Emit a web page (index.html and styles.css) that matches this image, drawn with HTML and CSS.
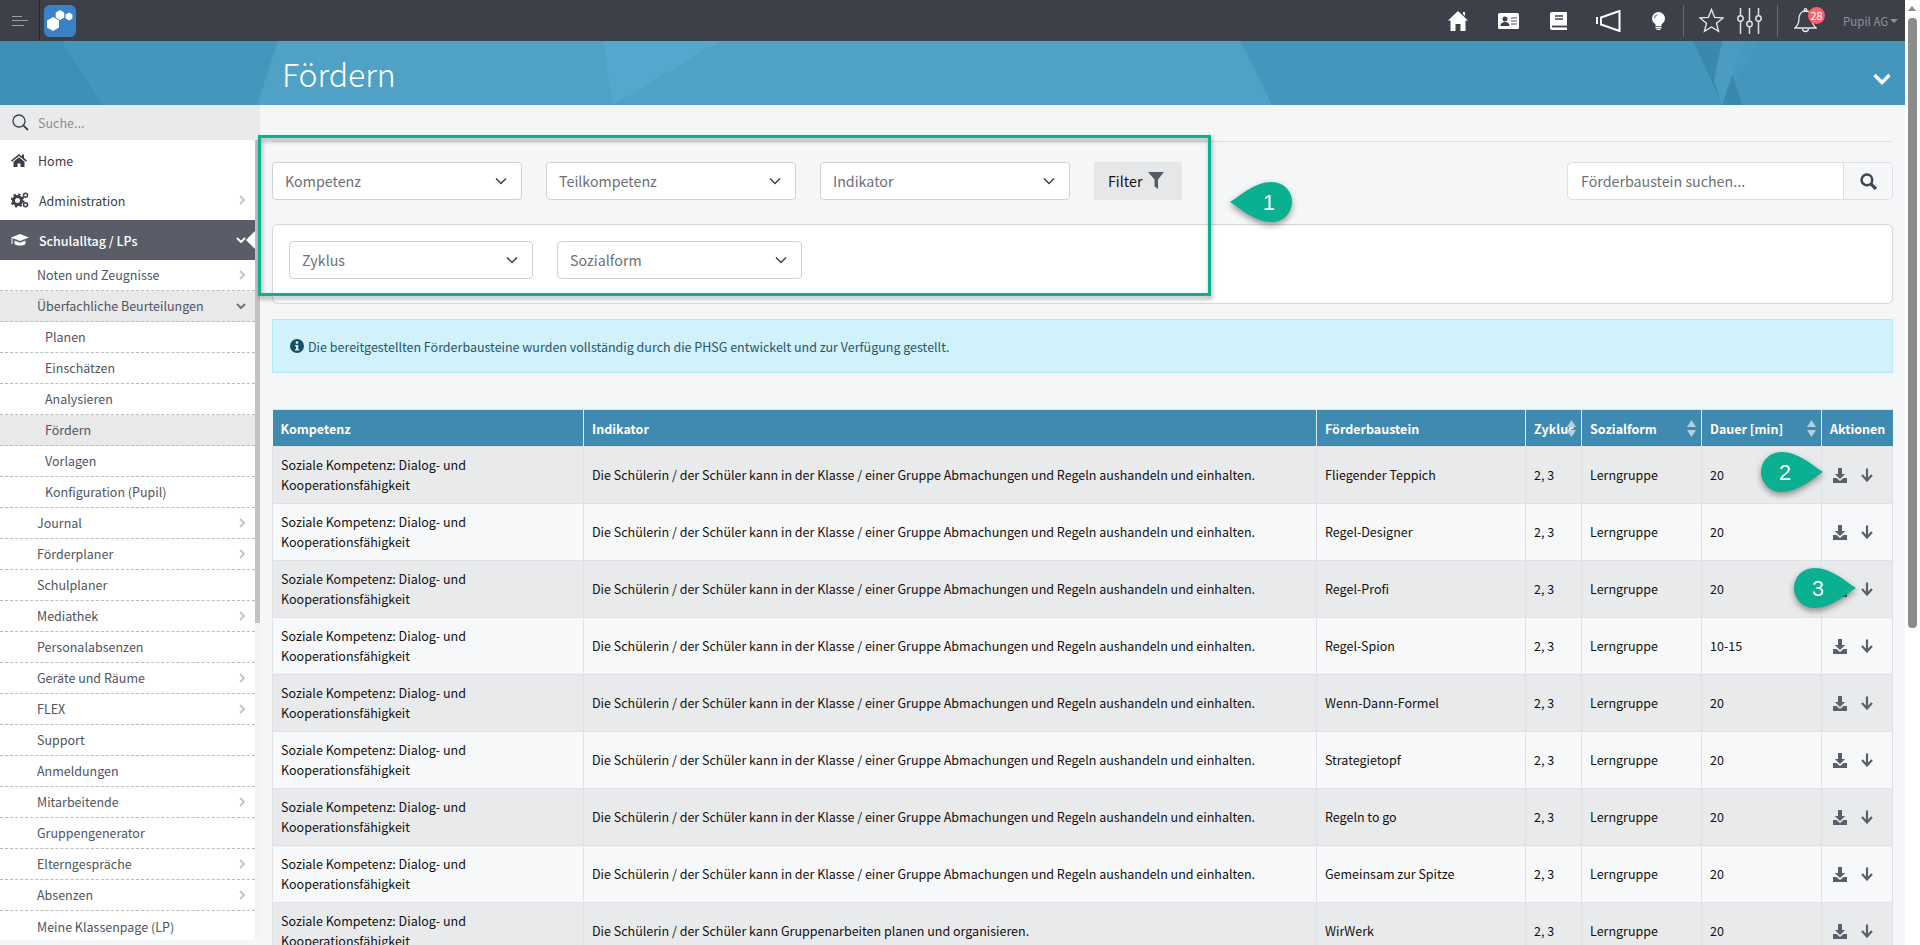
FILE: index.html
```html
<!DOCTYPE html>
<html>
<head>
  <meta name='viewport' content='width=device-width, initial-scale=1'>
  <meta charset='UTF-8'>
  <title>Fördern</title>
  <link rel="stylesheet" href="styles.css">
</head>
<body>
  <svg class='defs' width='0' height='0'>
    <symbol id='dl' viewBox='0 0 14 15'><path d='M5 0h4v6h3.200L7 11 1.800 6H5z'/><path d='M0 10h3.500L7 13l3.500-3H14v5H0z'/></symbol>
    <symbol id='arrow' viewBox='0 0 12 14'><path d='M6 .5v11.500M1 7l5 5.500L11 7' fill='none' stroke='currentColor' stroke-width='2.200'/></symbol>
    <symbol id='right' viewBox='0 0 6 10'><path d='M1 1l4 4-4 4' fill='none' stroke='currentColor' stroke-width='2'/></symbol>
    <symbol id='down' viewBox='0 0 10 6'><path d='M1 1l4 4 4-4' fill='none' stroke='currentColor' stroke-width='2'/></symbol>
    <symbol id='sel' viewBox='0 0 12 8'><path d='M1 1.500l5 5 5-5' fill='none' stroke='currentColor' stroke-width='1.500'/></symbol>
    <symbol id='sort' viewBox='0 0 9 17'><path d='M4.500 0 9 7H0zM4.500 17 0 10h9z'/></symbol>
  </svg>

  <div class='app'>
    <header class='top'>
      <div class='burger'><i></i><i></i><i></i></div>
      <svg class='logo' viewBox='0 0 32 32'>
        <rect width='32' height='32' rx='6' fill='#3b82c4'/>
        <path d='M9 12l6 3.500v7L9 26l-6-3.500v-7z' fill='#fff'/>
        <path d='M16 5l4.300 2.500v5L16 15l-4.300-2.500v-5z' fill='#fff'/>
        <path d='M25 7.500l3.400 2v4L25 15.500l-3.400-2v-4z' fill='#fff'/>
      </svg>
      <div class='top-r'>
        <svg class='ti ti-home' viewBox='0 0 20 20'><path d='M10 0 20 9.500h-2.500V20h-5v-7h-5v7h-5V9.500H0z' fill='#fff'/><path d='M15 1h2v4l-2-2z' fill='#fff'/></svg>
        <svg class='ti ti-card' viewBox='0 0 21 16'><rect width='21' height='16' rx='1.500' fill='#fff'/><circle cx='7' cy='6' r='2.500' fill='#3d4049'/><path d='M2.500 13c0-3 2-4 4.500-4s4.500 1 4.500 4z' fill='#3d4049'/><path d='M13 5h6M13 8h6M13 11h6' stroke='#8a8d95' stroke-width='1.300'/></svg>
        <svg class='ti ti-book' viewBox='0 0 17 18'><path d='M2 0h15v18H2a2 2 0 0 1-2-2V2a2 2 0 0 1 2-2z' fill='#fff'/><path d='M5 4h8M5 7h8' stroke='#3d4049' stroke-width='1.300'/><path d='M2 14.500h15' stroke='#3d4049' stroke-width='1.800'/></svg>
        <svg class='ti ti-mega' viewBox='0 0 25 22'><path d='M0 7h2v7H0z' fill='#fff'/><path d='M5 7.500 23.500 1v20L5 14.500z' fill='none' stroke='#fff' stroke-width='2'/></svg>
        <svg class='ti ti-bulb' viewBox='0 0 15 18'><circle cx='7.500' cy='6.500' r='6.500' fill='#fff'/><path d='M4.500 10h6v4h-6z' fill='#fff'/><path d='M4.500 15.500h6M5.500 17.300h4' stroke='#fff' stroke-width='1.300'/><path d='M3.500 6.500c0-2 1.200-3.300 3-3.600' fill='none' stroke='#56a7d8' stroke-width='1.300'/></svg>
        <span class='sep sep-a'></span>
        <svg class='ti ti-star' viewBox='0 0 25 25'><path d='M12.500 1.500l3.100 7.800 8.400.6-6.500 5.300 2.100 8.200-7.100-4.500-7.100 4.500 2.100-8.200L1 9.900l8.400-.6z' fill='none' stroke='#e8e8e8' stroke-width='1.300'/></svg>
        <svg class='ti ti-sliders' viewBox='0 0 25 26' fill='none' stroke='#e0e0e0' stroke-width='1.500'><path d='M3.500 0v8M3.500 13v13M12.500 0v13M12.500 19v7M21.500 0v8M21.500 13v13'/><circle cx='3.500' cy='10.500' r='2.700'/><circle cx='12.500' cy='16' r='2.700'/><circle cx='21.500' cy='10.500' r='2.700'/></svg>
        <span class='sep sep-b'></span>
        <div class='bell'>
          <svg class='ti-bell' viewBox='0 0 23 26' fill='none' stroke='#e8e8e8' stroke-width='1.300'><path d='M11.500 3c-4.500 0-6.500 3.500-6.500 8 0 4-1 6-4 9h21c-3-3-4-5-4-9 0-4.500-2-8-6.500-8z'/><circle cx='11.500' cy='2' r='1.300'/><path d='M8.500 20.500a3 3 0 0 0 6 0'/></svg>
          <span class='badge'>28</span>
        </div>
        <span class='user'>Pupil AG<i class='caret'></i></span>
      </div>
    </header>

    <div class='banner'>
      <svg class='banner-bg' viewBox='0 0 1905 64' preserveAspectRatio='none'>
        <rect width='1905' height='64' fill='#4396bc'/>
        <path d='M0 0h62l40 64H0z' fill='#3f90b6'/>
        <path d='M278 0h963l31 64H257z' fill='#4fa1c6'/>
        <path d='M603 0h117l-107 64z' fill='#55a8cd'/>
        <path d='M1722 0h37l-37 64z' fill='#469abf'/>
        <path d='M1693 0h29l20 64h-19z' fill='#3b88af'/>
        <path d='M1722 0h22l-22 64-8-24z' fill='#4a9cc2'/>
      </svg>
      <h1>Fördern</h1>
      <svg class='banner-chev' viewBox='0 0 18 12'><path d='M1.500 2 9 9.500 16.500 2' fill='none' stroke='#fff' stroke-width='3.400'/></svg>
    </div>

    <div class='body'>
      <aside class='side'>
        <div class='side-search'>
          <svg class='side-mag' viewBox='0 0 17 17' fill='none' stroke='#3d4049' stroke-width='1.300'><circle cx='7' cy='7' r='6'/><path d='M11.300 11.300 16 16' stroke-width='1.800'/></svg>
          <span>Suche...</span>
        </div>
        <div class='side-wrap'>
          <nav class='nav'>
            <a class='top-item'>
              <svg class='ni ni-home' viewBox='0 0 16 14'><path d='M8 1 0 7.500l1 1.200L8 3l7 5.700 1-1.200-3-2.400V1.500h-2v2z'/><path d='M8 4.300 2.500 8.800V14H6.500v-3.500h3V14h4V8.800z'/></svg>Home
            </a>
            <a class='top-item'>
              <svg class='ni ni-cogs' viewBox='0 0 18 16'>
                <circle cx='6.500' cy='8.500' r='4' fill='none' stroke='#3d4049' stroke-width='3'/>
                <circle cx='6.500' cy='8.500' r='6' fill='none' stroke='#3d4049' stroke-width='2' stroke-dasharray='2.300 2.400'/>
                <circle cx='14.500' cy='3.200' r='2' fill='none' stroke='#3d4049' stroke-width='1.500'/>
                <circle cx='14.500' cy='12.800' r='2' fill='none' stroke='#3d4049' stroke-width='1.500'/>
              </svg><span class='ni-t'>Administration</span>
              <svg class='chev'><use href='#right'/></svg>
            </a>
            <a class='top-item on'>
              <svg class='ni ni-cap' viewBox='0 0 18 14'><path d='M9 1 18 4.500 9 8 0 4.500z' fill='#fff'/><path d='M3.500 7.500V11c3 2 8 2 11 0V7.500L9 9.700z' fill='#fff'/><path d='M1 5v6' stroke='#fff'/></svg><span class='ni-t'>Schulalltag / LPs</span>
              <svg class='chev-d chev-w'><use href='#down'/></svg>
              <i class='notch'></i>
            </a>
            <a class='sub'>Noten und Zeugnisse<svg class='chev'><use href='#right'/></svg></a>
            <a class='sub act'>Überfachliche Beurteilungen<svg class='chev-d'><use href='#down'/></svg></a>
            <a class='sub sub2'>Planen</a>
            <a class='sub sub2'>Einschätzen</a>
            <a class='sub sub2'>Analysieren</a>
            <a class='sub sub2 act'>Fördern</a>
            <a class='sub sub2'>Vorlagen</a>
            <a class='sub sub2'>Konfiguration (Pupil)</a>
            <a class='sub'>Journal<svg class='chev'><use href='#right'/></svg></a>
            <a class='sub'>Förderplaner<svg class='chev'><use href='#right'/></svg></a>
            <a class='sub'>Schulplaner</a>
            <a class='sub'>Mediathek<svg class='chev'><use href='#right'/></svg></a>
            <a class='sub'>Personalabsenzen</a>
            <a class='sub'>Geräte und Räume<svg class='chev'><use href='#right'/></svg></a>
            <a class='sub'>FLEX<svg class='chev'><use href='#right'/></svg></a>
            <a class='sub'>Support</a>
            <a class='sub'>Anmeldungen</a>
            <a class='sub'>Mitarbeitende<svg class='chev'><use href='#right'/></svg></a>
            <a class='sub'>Gruppengenerator</a>
            <a class='sub'>Elterngespräche<svg class='chev'><use href='#right'/></svg></a>
            <a class='sub'>Absenzen<svg class='chev'><use href='#right'/></svg></a>
            <a class='sub last'>Meine Klassenpage (LP)</a>
          </nav>
          <div class='side-track'><div class='side-thumb'></div></div>
        </div>
      </aside>

      <main class='main'>
        <hr class='rule'>
        <div class='filters'>
          <div class='sel'>Kompetenz<svg><use href='#sel'/></svg></div>
          <div class='sel'>Teilkompetenz<svg><use href='#sel'/></svg></div>
          <div class='sel'>Indikator<svg><use href='#sel'/></svg></div>
          <div class='btn-filter'>Filter
            <svg viewBox='0 0 16 17'><path d='M0 0h16L10 7.500V17L6.500 14.500V7.500z' fill='#565a66'/></svg>
          </div>
          <div class='find'>
            <span class='find-in'>Förderbaustein suchen...</span>
            <span class='find-btn'><svg viewBox='0 0 16 16' fill='none' stroke='#3f4654' stroke-width='2.400'><circle cx='6.500' cy='6.500' r='5'/><path d='M10.200 10.200 15 15' stroke-width='3'/></svg></span>
          </div>
        </div>
        <div class='card'>
          <div class='sel sel-z'>Zyklus<svg><use href='#sel'/></svg></div>
          <div class='sel sel-s'>Sozialform<svg><use href='#sel'/></svg></div>
        </div>
        <div class='alert'>
          <svg class='alert-i' viewBox='0 0 14 14'><circle cx='7' cy='7' r='7' fill='#174f66'/><rect x='5.800' y='2.300' width='2.400' height='2.400' fill='#d1f2fa'/><path d='M5 6h3.200v4.200h1v1.300H5v-1.300h1V7.300H5z' fill='#d1f2fa'/></svg>
          Die bereitgestellten Förderbausteine wurden vollständig durch die PHSG entwickelt und zur Verfügung gestellt.
        </div>
        <table class='tbl'>
          <colgroup>
            <col class='c1'><col class='c2'><col class='c3'><col class='c4'><col class='c5'><col class='c6'><col class='c7'>
          </colgroup>
          <thead>
            <tr>
              <th>Kompetenz</th><th>Indikator</th><th>Förderbaustein</th>
              <th class='srt'>Zyklus<svg><use href='#sort'/></svg></th>
              <th class='srt'>Sozialform<svg><use href='#sort'/></svg></th>
              <th class='srt'>Dauer [min]<svg><use href='#sort'/></svg></th>
              <th>Aktionen</th>
            </tr>
          </thead>
          <tbody>
            <tr><td>Soziale Kompetenz: Dialog- und Kooperationsfähigkeit</td><td>Die Schülerin / der Schüler kann in der Klasse / einer Gruppe Abmachungen und Regeln aushandeln und einhalten.</td><td>Fliegender Teppich</td><td>2, 3</td><td>Lerngruppe</td><td>20</td><td><div class='acts'><svg class='i-dl'><use href='#dl'/></svg><svg class='i-ar'><use href='#arrow'/></svg></div></td></tr>
            <tr><td>Soziale Kompetenz: Dialog- und Kooperationsfähigkeit</td><td>Die Schülerin / der Schüler kann in der Klasse / einer Gruppe Abmachungen und Regeln aushandeln und einhalten.</td><td>Regel-Designer</td><td>2, 3</td><td>Lerngruppe</td><td>20</td><td><div class='acts'><svg class='i-dl'><use href='#dl'/></svg><svg class='i-ar'><use href='#arrow'/></svg></div></td></tr>
            <tr><td>Soziale Kompetenz: Dialog- und Kooperationsfähigkeit</td><td>Die Schülerin / der Schüler kann in der Klasse / einer Gruppe Abmachungen und Regeln aushandeln und einhalten.</td><td>Regel-Profi</td><td>2, 3</td><td>Lerngruppe</td><td>20</td><td><div class='acts'><svg class='i-dl'><use href='#dl'/></svg><svg class='i-ar'><use href='#arrow'/></svg></div></td></tr>
            <tr><td>Soziale Kompetenz: Dialog- und Kooperationsfähigkeit</td><td>Die Schülerin / der Schüler kann in der Klasse / einer Gruppe Abmachungen und Regeln aushandeln und einhalten.</td><td>Regel-Spion</td><td>2, 3</td><td>Lerngruppe</td><td>10-15</td><td><div class='acts'><svg class='i-dl'><use href='#dl'/></svg><svg class='i-ar'><use href='#arrow'/></svg></div></td></tr>
            <tr><td>Soziale Kompetenz: Dialog- und Kooperationsfähigkeit</td><td>Die Schülerin / der Schüler kann in der Klasse / einer Gruppe Abmachungen und Regeln aushandeln und einhalten.</td><td>Wenn-Dann-Formel</td><td>2, 3</td><td>Lerngruppe</td><td>20</td><td><div class='acts'><svg class='i-dl'><use href='#dl'/></svg><svg class='i-ar'><use href='#arrow'/></svg></div></td></tr>
            <tr><td>Soziale Kompetenz: Dialog- und Kooperationsfähigkeit</td><td>Die Schülerin / der Schüler kann in der Klasse / einer Gruppe Abmachungen und Regeln aushandeln und einhalten.</td><td>Strategietopf</td><td>2, 3</td><td>Lerngruppe</td><td>20</td><td><div class='acts'><svg class='i-dl'><use href='#dl'/></svg><svg class='i-ar'><use href='#arrow'/></svg></div></td></tr>
            <tr><td>Soziale Kompetenz: Dialog- und Kooperationsfähigkeit</td><td>Die Schülerin / der Schüler kann in der Klasse / einer Gruppe Abmachungen und Regeln aushandeln und einhalten.</td><td>Regeln to go</td><td>2, 3</td><td>Lerngruppe</td><td>20</td><td><div class='acts'><svg class='i-dl'><use href='#dl'/></svg><svg class='i-ar'><use href='#arrow'/></svg></div></td></tr>
            <tr><td>Soziale Kompetenz: Dialog- und Kooperationsfähigkeit</td><td>Die Schülerin / der Schüler kann in der Klasse / einer Gruppe Abmachungen und Regeln aushandeln und einhalten.</td><td>Gemeinsam zur Spitze</td><td>2, 3</td><td>Lerngruppe</td><td>20</td><td><div class='acts'><svg class='i-dl'><use href='#dl'/></svg><svg class='i-ar'><use href='#arrow'/></svg></div></td></tr>
            <tr><td>Soziale Kompetenz: Dialog- und Kooperationsfähigkeit</td><td>Die Schülerin / der Schüler kann Gruppenarbeiten planen und organisieren.</td><td>WirWerk</td><td>2, 3</td><td>Lerngruppe</td><td>20</td><td><div class='acts'><svg class='i-dl'><use href='#dl'/></svg><svg class='i-ar'><use href='#arrow'/></svg></div></td></tr>
          </tbody>
        </table>
      </main>
    </div>

    <!-- annotations on top of the screenshot -->
    <div class='frame'></div>
    <svg class='tag tag-1' viewBox='0 0 62 40'><path d='M0 20C10 14 24 0 42 0a20 20 0 0 1 0 40C24 40 10 26 0 20z' fill='#0ab08f'/><text x='39' y='28' text-anchor='middle'>1</text></svg>
    <svg class='tag tag-2' viewBox='0 0 62 40'><path d='M62 20C52 14 38 0 20 0a20 20 0 0 0 0 40C38 40 52 26 62 20z' fill='#0ab08f'/><text x='24' y='28' text-anchor='middle'>2</text></svg>
    <svg class='tag tag-3' viewBox='0 0 62 40'><path d='M62 20C52 14 38 0 20 0a20 20 0 0 0 0 40C38 40 52 26 62 20z' fill='#0ab08f'/><text x='24' y='28' text-anchor='middle'>3</text></svg>
  </div>

  <div class='pscroll'>
    <i class='pscroll-up'></i>
    <div class='pscroll-thumb'></div>
  </div>
</body>
</html>
```

FILE: styles.css
```css
*{box-sizing:border-box;}
html,body{margin:0;height:945px;overflow:hidden;}
body{display:flex;background:#fff;color:#111;font-family:"Noto Sans CJK SC","Source Sans Pro","Noto Sans",sans-serif;font-size:12.500px;}
.defs{position:absolute;}

.app{position:relative;width:1905px;height:945px;display:flex;flex-direction:column;background:#f5f6f8;}

/* top bar */
.top{height:41px;flex:none;background:#3d4049;display:flex;align-items:center;}
.burger{width:40px;height:41px;border-right:1px solid #26282e;display:flex;flex-direction:column;align-items:center;justify-content:center;gap:3.500px;}
.burger i{display:block;height:1px;background:#9b9da3;width:16px;}
.burger i:nth-child(1){width:10px;margin-right:5px;}
.burger i:nth-child(3){width:12px;margin-right:3px;}
.logo{width:32px;height:32px;margin-left:4px;}
.top-r{margin-left:auto;display:flex;align-items:center;height:41px;width:457px;}
.ti{display:block;flex:none;}
.ti-home{width:20px;height:20px;}
.ti-card{width:21px;height:16px;margin-left:30px;}
.ti-book{width:17px;height:18px;margin-left:31px;}
.ti-mega{width:25px;height:22px;margin-left:29px;}
.ti-bulb{width:15px;height:18px;margin-left:30px;}
.sep{width:1px;height:32px;background:#676a72;flex:none;}
.sep-a{margin-left:17px;}
.ti-star{width:25px;height:25px;margin-left:15px;}
.ti-sliders{width:25px;height:26px;margin-left:13px;}
.sep-b{margin-left:15px;}
.bell{position:relative;width:23px;height:26px;margin-left:16px;}
.ti-bell{width:23px;height:26px;display:block;}
.badge{position:absolute;left:14px;top:-1px;width:17px;height:17px;border-radius:50%;background:#f4636f;color:#fff;font-size:11px;line-height:16px;text-align:center;}
.user{margin-left:26px;color:#8f9299;font-size:11.500px;line-height:16px;display:flex;align-items:center;white-space:nowrap;}
.caret{width:0;height:0;border:4px solid transparent;border-top:4.500px solid #8f9299;border-bottom:0;margin-left:2px;}

/* banner */
.banner{height:64px;flex:none;position:relative;color:#fff;}
.banner-bg{position:absolute;left:0;top:0;width:100%;height:100%;display:block;}
.banner h1{position:relative;margin:0;padding:0 0 0 282px;font-weight:300;font-size:32px;line-height:65px;}
.banner-chev{position:absolute;left:1873px;top:32px;width:18px;height:12px;}

.body{flex:1;display:flex;min-height:0;}

/* sidebar */
.side{width:260px;flex:none;display:flex;flex-direction:column;}
.side-search{height:35px;flex:none;background:#e9eaec;display:flex;align-items:center;padding-left:12px;color:#8a8d95;}
.side-mag{width:17px;height:17px;margin-right:9px;}
.side-wrap{height:800px;display:flex;}
.nav{width:255px;background:#fff;color:#50545f;overflow:hidden;}
.nav a{display:flex;align-items:center;position:relative;white-space:nowrap;}
.top-item{height:40px;padding-left:11px;color:#3d4049;}
.top-item.on{background:#5a5d68;color:#fff;font-weight:500;}
.ni{flex:none;fill:#3d4049;}
.ni-home{width:16px;height:14px;margin-right:11px;}
.ni-cogs{width:18px;height:16px;margin-right:10px;}
.ni-cap{width:18px;height:14px;margin-right:10px;}
.sub{height:31px;padding-left:37px;padding-bottom:1px;border-bottom:1px dashed #bdbdbd;}
.sub2{padding-left:45px;}
.sub.act{background:#e9e9e9;}
.sub.last{border-bottom:0;}
.chev{position:absolute;left:239px;top:50%;margin-top:-5px;width:6px;height:10px;color:#c6c6c6;}
.chev-d{position:absolute;left:236px;top:50%;margin-top:-3px;width:10px;height:6px;color:#6e717b;}
.chev-w{color:#fff;}
.notch{position:absolute;right:0;top:11px;width:0;height:0;border:9px solid transparent;border-right:9px solid #fff;border-left:0;}
.side-track{width:5px;background:#f3f3f3;}
.side-thumb{height:483px;background:#c3c3c3;}

/* main column */
.main{flex:1;min-width:0;padding:36px 12px 0 12px;overflow:hidden;}
.rule{margin:0;border:0;border-top:1px solid #dcdee2;}
.filters{display:flex;margin-top:20px;}
.sel{position:relative;height:38px;background:#fff;border:1px solid #ced1d6;border-radius:4px;color:#6c7078;font-size:14.250px;line-height:36px;padding-left:12px;}
.sel svg{position:absolute;right:14px;top:14px;width:12px;height:8px;color:#3d4049;}
.filters .sel{width:250px;margin-right:24px;}
.btn-filter{width:88px;height:38px;padding-bottom:2px;background:#e6e7e9;color:#111;font-size:14.250px;display:flex;align-items:center;padding-left:14px;}
.btn-filter svg{width:16px;height:17px;margin-left:6px;}
.find{margin-left:auto;width:326px;height:38px;display:flex;background:#fff;border:1px solid #dcdee2;border-radius:5px;overflow:hidden;}
.find-in{flex:1;padding-left:13px;font-size:14.250px;line-height:36px;color:#6c7078;}
.find-btn{width:49px;background:#f5f6f8;border-left:1px solid #dcdee2;display:flex;align-items:center;justify-content:center;}
.find-btn svg{width:17px;height:17px;}
.card{margin-top:24px;height:80px;background:#fff;border:1px solid #d5d6d9;border-radius:6px;padding:16px 16px 0;display:flex;gap:24px;}
.sel-z{width:244px;}
.sel-s{width:245px;}
.alert{margin-top:15px;height:54px;background:#d1f2fa;border:1px solid #b4e9f7;display:flex;align-items:center;padding-left:17px;color:#27566a;}
.alert-i{width:14px;height:14px;margin-right:4px;flex:none;}

/* table */
.tbl{margin-top:36px;width:1620px;table-layout:fixed;border-collapse:collapse;}
.c1{width:311px;}
.c2{width:733px;}
.c3{width:209px;}
.c4{width:56px;}
.c5{width:120px;}
.c6{width:120px;}
.c7{width:71px;}
.tbl th{height:37px;background:#3e8ab1;color:#fff;font-size:12.500px;font-weight:700;text-align:left;padding:0 8px;border-top:1px solid #dfe1e5;border-right:1px solid #e4e8ec;white-space:nowrap;}
.tbl th:last-child{border-right:0;}
.srt{position:relative;}
.srt svg{position:absolute;right:5px;top:10px;width:9px;height:17px;fill:#b4d0df;}
.tbl td{height:57px;padding:0 8px;border:1px solid #dfe1e5;font-size:12.500px;line-height:20px;color:#111;}
.tbl tbody tr:nth-child(odd) td{background:#e9eaec;}
.tbl tbody tr:nth-child(even) td{background:#f7f8fa;}
.acts{display:flex;align-items:center;}
.i-dl{width:14px;height:15px;fill:#5b5f6b;margin-left:3px;}
.i-ar{width:12px;height:14px;color:#5b5f6b;margin-left:14px;}

/* annotations */
.frame{position:absolute;left:258px;top:135px;width:953px;height:161px;border:3px solid #0ab08f;filter:drop-shadow(1px 3px 2px rgba(0,0,0,.35));}
.tag{position:absolute;width:62px;height:40px;overflow:visible;filter:drop-shadow(0 3px 3px rgba(0,0,0,.4));}
.tag text{font-family:"Liberation Sans",sans-serif;font-size:22px;fill:#fff;}
.tag-1{left:1230px;top:182px;}
.tag-2{left:1761px;top:452px;}
.tag-3{left:1794px;top:568px;}

/* page scrollbar */
.pscroll{width:15px;flex:none;position:relative;background:#fff;padding:18px 3px 0;}
.pscroll-up{position:absolute;left:3px;top:6px;width:0;height:0;border:4.500px solid transparent;border-bottom:5px solid #8b8b8b;border-top:0;}
.pscroll-thumb{height:610px;background:#8b8b8b;border-radius:4px;}
```
